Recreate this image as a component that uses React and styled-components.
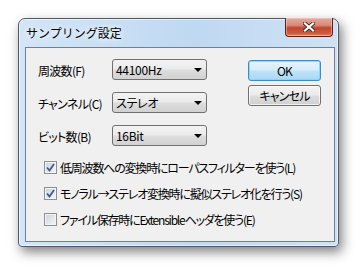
import React from 'react';
import styled, { createGlobalStyle } from 'styled-components';

const GlobalStyle = createGlobalStyle`
  html, body {
    margin: 0;
    padding: 0;
    background: #ffffff;
  }
  body {
    font-family: "Noto Sans CJK JP", "Noto Sans", sans-serif;
    font-size: 12px;
    color: #000;
    font-feature-settings: "palt";
  }
`;

const Desktop = styled.div`
  width: 361px;
  height: 270px;
  padding: 18px 0 0 18px;
  box-sizing: border-box;
`;

const Window = styled.div`
  width: 321px;
  height: 229px;
  box-sizing: border-box;
  display: flex;
  flex-direction: column;
  padding: 0 3px 4px 6px;
  border: 1px solid #4d5b69;
  border-radius: 7px 7px 4px 4px;
  background: linear-gradient(90deg, #d3e5f6 0%, #bfd9f2 55%, #cfe2f5 100%);
  box-shadow: inset 0 0 0 1px rgba(255, 255, 255, 0.55), 3px 5px 12px rgba(0, 0, 0, 0.5);
`;

const TitleBar = styled.div`
  height: 28px;
  flex: none;
  display: flex;
  justify-content: space-between;
  align-items: flex-start;
`;

const Title = styled.div`
  padding: 6px 0 0 1px;
  font-size: 12px;
  line-height: 15px;
  font-feature-settings: normal;
  color: #000;
  text-shadow: 0 0 6px #ffffff, 0 0 10px rgba(255, 255, 255, 0.8);
`;

const CloseButton = styled.div`
  width: 48px;
  height: 19px;
  margin: -1px 2px 0 0;
  box-sizing: border-box;
  display: flex;
  align-items: center;
  justify-content: center;
  border: 1px solid #5c2219;
  border-top: none;
  border-radius: 0 0 4px 4px;
  background: linear-gradient(180deg, #e7a99b 0%, #d88a78 40%, #c3452e 55%, #cc5a3e 85%, #e0896a 100%);
  box-shadow: inset 0 0 0 1px rgba(255, 220, 210, 0.45);
`;

const Client = styled.div`
  flex: 1;
  border: 1px solid #6f8094;
  background: #f0f0f0;
  padding: 11px 0 0 12px;
  display: flex;
  flex-direction: column;
`;

const TopSection = styled.div`
  display: flex;
  align-items: flex-start;
`;

const FieldList = styled.div`
  display: flex;
  flex-direction: column;
  gap: 12px;
`;

const Field = styled.div`
  display: flex;
  align-items: center;
  height: 21px;
`;

const Label = styled.div`
  width: 74px;
  line-height: 15px;
  padding-top: 1px;
  letter-spacing: -0.7px;
  white-space: nowrap;
`;

const Combo = styled.div`
  width: 95px;
  height: 21px;
  box-sizing: border-box;
  border: 1px solid #707070;
  border-radius: 3px;
  background: linear-gradient(180deg, #f3f3f3 0%, #ebebeb 48%, #dddddd 52%, #d2d2d2 100%);
  display: flex;
  align-items: center;
  justify-content: space-between;
  padding: 0 4px 0 3px;
  line-height: 15px;
  letter-spacing: -0.3px;
`;

const Arrow = styled.div`
  width: 0;
  height: 0;
  border-left: 4px solid transparent;
  border-right: 4px solid transparent;
  border-top: 4px solid #000;
  margin-top: 1px;
`;

const ButtonColumn = styled.div`
  display: flex;
  flex-direction: column;
  gap: 4px;
  margin: 1px 0 0 41px;
`;

const Button = styled.div`
  width: 73px;
  height: 21px;
  box-sizing: border-box;
  border: 1px solid ${p => (p.$default ? '#3c8dc7' : '#707070')};
  border-radius: 3px;
  background: ${p =>
    p.$default
      ? 'linear-gradient(180deg, #e5f4fc 0%, #d4edfa 48%, #bfe3f7 52%, #a9d8f3 100%)'
      : 'linear-gradient(180deg, #f3f3f3 0%, #ebebeb 48%, #dddddd 52%, #cfcfcf 100%)'};
  box-shadow: inset 0 0 0 1px ${p => (p.$default ? 'rgba(120, 220, 250, 0.9)' : 'rgba(255, 255, 255, 0.7)')};
  display: flex;
  align-items: center;
  justify-content: center;
  line-height: 15px;
  letter-spacing: -0.8px;
`;

const CheckList = styled.div`
  display: flex;
  flex-direction: column;
  gap: 10px;
  margin: 13px 0 0 6px;
`;

const CheckRow = styled.div`
  display: flex;
  align-items: center;
  height: 16px;
  gap: 3px;
`;

const Box = styled.div`
  width: 13px;
  height: 13px;
  box-sizing: border-box;
  border: 1px solid #8e8f8f;
  background: linear-gradient(135deg, #cbcfd5 0%, #e7e9ec 60%, #f6f6f6 100%);
  box-shadow: inset 0 0 0 1px #f4f4f4;
  display: flex;
  align-items: center;
  justify-content: center;
`;

const CheckText = styled.div`
  line-height: 15px;
  white-space: nowrap;
  letter-spacing: -1.2px;
`;

const CloseGlyph = () => (
  <svg width="12" height="10" viewBox="0 0 12 10">
    <path d="M2 1.5 L10 8.5 M10 1.5 L2 8.5" stroke="#4a2a25" strokeWidth="4" strokeLinecap="square" />
    <path d="M2 1.5 L10 8.5 M10 1.5 L2 8.5" stroke="#ffffff" strokeWidth="2.2" strokeLinecap="square" />
  </svg>
);

const CheckMark = () => (
  <svg width="9" height="9" viewBox="0 0 9 9">
    <path d="M1 4.5 L3.5 7.5 L8 1" fill="none" stroke="#3a5b97" strokeWidth="1.8" />
  </svg>
);

const fields = [
  { label: '周波数(F)', value: '44100Hz' },
  { label: 'チャンネル(C)', value: 'ステレオ' },
  { label: 'ビット数(B)', value: '16Bit' },
];

const options = [
  { text: '低周波数への変換時にローパスフィルターを使う(L)', checked: true },
  { text: 'モノラル→ステレオ変換時に擬似ステレオ化を行う(S)', checked: true },
  { text: 'ファイル保存時にExtensibleヘッダを使う(E)', checked: false },
];

const App = () => (
  <Desktop>
    <GlobalStyle />
    <Window>
      <TitleBar>
        <Title>サンプリング設定</Title>
        <CloseButton>
          <CloseGlyph />
        </CloseButton>
      </TitleBar>
      <Client>
        <TopSection>
          <FieldList>
            {fields.map(f => (
              <Field key={f.label}>
                <Label>{f.label}</Label>
                <Combo>
                  <span>{f.value}</span>
                  <Arrow />
                </Combo>
              </Field>
            ))}
          </FieldList>
          <ButtonColumn>
            <Button $default>OK</Button>
            <Button>キャンセル</Button>
          </ButtonColumn>
        </TopSection>
        <CheckList>
          {options.map(o => (
            <CheckRow key={o.text}>
              <Box>{o.checked && <CheckMark />}</Box>
              <CheckText>{o.text}</CheckText>
            </CheckRow>
          ))}
        </CheckList>
      </Client>
    </Window>
  </Desktop>
);

export default App;
